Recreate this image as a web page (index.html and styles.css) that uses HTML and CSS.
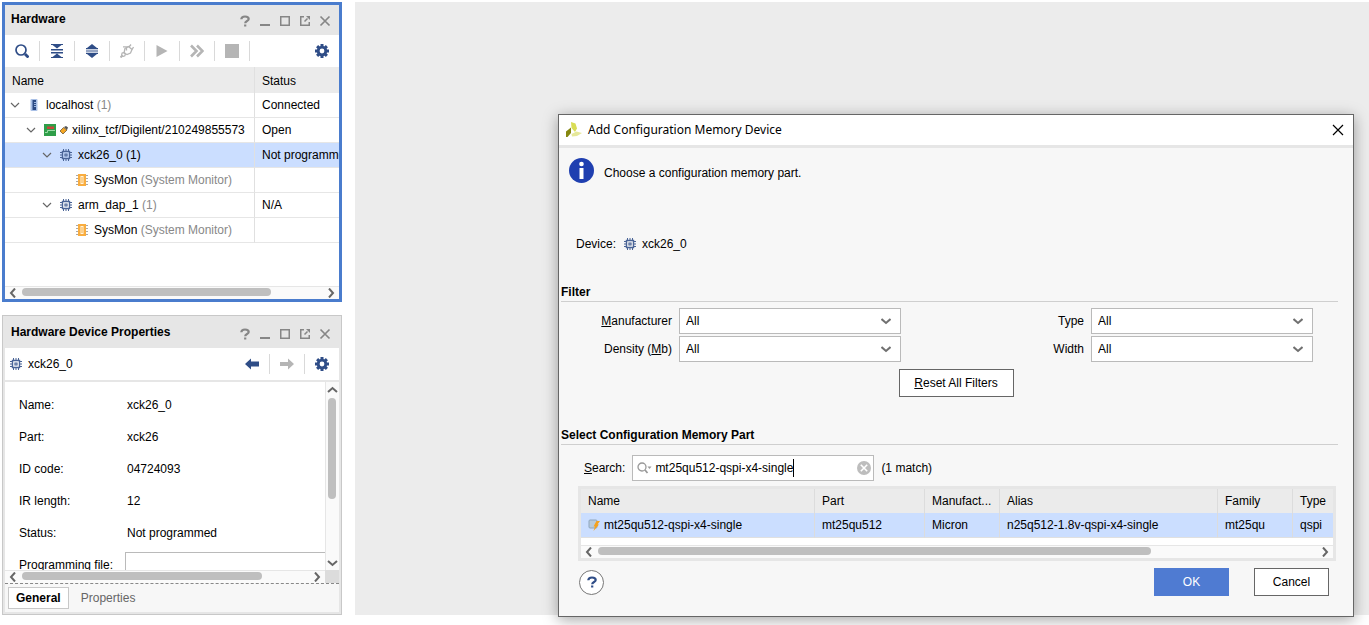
FILE: index.html
```html
<!DOCTYPE html>
<html lang="en">
<head>
  <meta charset="UTF-8">
  <title>Hardware Manager</title>
  <link rel="stylesheet" href="styles.css">
</head>
<body>
  <!-- shared icons -->
  <svg class="sprite" aria-hidden="true">
    <symbol id="help" viewBox="0 0 12 12"><path d="M2.3 4.3C2.4 2.3 4 1.5 6 1.500s3.700.9 3.700 2.600C9.700 6.200 6.200 5.900 6.200 8.300M6.200 9.400v2" fill="none" stroke="currentColor" stroke-width="2.200"/></symbol>
    <symbol id="min" viewBox="0 0 12 12"><path d="M1 10h10" stroke="currentColor" stroke-width="2"/></symbol>
    <symbol id="max" viewBox="0 0 12 12"><path d="M1.750 1.750h8.500v8.500h-8.500z" fill="none" stroke="currentColor" stroke-width="1.500"/></symbol>
    <symbol id="float" viewBox="0 0 12 12"><path d="M5 1.750H1.750v8.500h8.500V7M5.500 6.500L8.500 3.500" fill="none" stroke="currentColor" stroke-width="1.500"/><path d="M7 1H11v4z" fill="currentColor"/></symbol>
    <symbol id="close" viewBox="0 0 12 12"><path d="M1.500 1.500l9 9M10.500 1.500l-9 9" stroke="currentColor" stroke-width="1.700"/></symbol>
    <symbol id="down" viewBox="0 0 10 10"><path d="M1 3l4 4 4-4" fill="none" stroke="currentColor" stroke-width="1.200"/></symbol>
    <symbol id="up" viewBox="0 0 10 10"><path d="M.5 7L5 3l4.500 4" fill="none" stroke="currentColor" stroke-width="2"/></symbol>
    <symbol id="downbold" viewBox="0 0 10 10"><path d="M.5 3L5 7l4.500-4" fill="none" stroke="currentColor" stroke-width="2"/></symbol>
    <symbol id="left" viewBox="0 0 10 10"><path d="M7 .5L3 5l4 4.500" fill="none" stroke="currentColor" stroke-width="2"/></symbol>
    <symbol id="right" viewBox="0 0 10 10"><path d="M3 .5L7 5 3 9.500" fill="none" stroke="currentColor" stroke-width="2"/></symbol>
    <symbol id="gear" viewBox="0 0 14 14">
      <path d="M7 0v3.500M7 10.500V14M0 7h3.500M10.500 7H14M2.100 2.100l2.400 2.400M9.500 9.500l2.400 2.400M2.100 11.900l2.400-2.400M9.500 4.500l2.400-2.400" stroke="currentColor" stroke-width="3"/>
      <circle cx="7" cy="7" r="3.800" fill="none" stroke="currentColor" stroke-width="2.800"/>
    </symbol>
    <symbol id="search" viewBox="0 0 14 14"><circle cx="6" cy="6" r="5" fill="none" stroke="currentColor" stroke-width="1.700"/><path d="M10 10l3.500 3.500" stroke="currentColor" stroke-width="2.800"/></symbol>
    <symbol id="collapse" viewBox="0 0 14 14"><path d="M1 0h12v1H1zM2.500 1h9L7 4.500zM1 5h12v1.500H1zM1 8h12v1.500H1zM7 9.500l4.500 3.500h-9zM1 13h12v1H1z" fill="currentColor"/></symbol>
    <symbol id="expand" viewBox="0 0 14 14"><path d="M7 0l5 4H2zM1 4h12v1.200H1zM1 6.400h12v1.200H1zM1 8.800h12V10H1zM2 10h10l-5 4z" fill="currentColor"/></symbol>
    <symbol id="plug" viewBox="0 0 14 14"><g fill="none" stroke="currentColor" stroke-width="1.300"><path d="M5 4.500L8.500 2.500 12 5.500 10.500 9 7 10.500 4 9z"/><path d="M9 3l2-2.500M12 5.500L13.500 3M3 2.800h5.500M6.500 3v3.500"/><circle cx="3.500" cy="10.500" r="1.800"/></g><path d="M2.500 11.500L.5 13.500" stroke="currentColor" stroke-width="2"/></symbol>
    <symbol id="play" viewBox="0 0 14 14"><path d="M1.500 1L12.500 7l-11 6z" fill="currentColor"/></symbol>
    <symbol id="forward" viewBox="0 0 14 14"><path d="M1 1.500L6.500 7 1 12.500M7 1.500L12.500 7 7 12.500" fill="none" stroke="currentColor" stroke-width="2.600"/></symbol>
    <symbol id="stop" viewBox="0 0 14 14"><path d="M0 0h14v14H0z" fill="currentColor"/></symbol>
    <symbol id="back" viewBox="0 0 14 12"><path d="M0 6l6-5.500v3h8v5H6v3z" fill="currentColor"/></symbol>
    <symbol id="next" viewBox="0 0 14 12"><path d="M14 6L8 .5v3.500H0v4h8v3.500z" fill="currentColor"/></symbol>
    <symbol id="chip" viewBox="0 0 12 12"><g fill="none" stroke="#4a6496"><path d="M2.500 2.500h7v7h-7z" stroke-width="1.400"/><path d="M5 5h2v2H5z" stroke-width="1.200"/><path d="M3.500 0v2M6 0v2M8.500 0v2M3.500 10v2M6 10v2M8.500 10v2M0 3.500h2M0 6h2M0 8.500h2M10 3.500h2M10 6h2M10 8.500h2"/></g></symbol>
    <symbol id="sysmon" viewBox="0 0 12 12"><path d="M0 1.500h12M0 4.500h12M0 7.500h12M0 10.500h12" stroke="#a9a9a9"/><path d="M2 0h8v12H2z" fill="#f9ad3f"/><path d="M4.500 2h3v8h-3z" fill="#fff3dc"/><path d="M6 3v6" stroke="#f9ad3f"/></symbol>
    <symbol id="server" viewBox="0 0 12 12"><rect x="2.500" width="7" height="12" rx="1" fill="#a9c0e6"/><path d="M4.500 1H8v10H4.500z" fill="#2b4a84"/><path d="M6 3.500h2M6 5.500h2M6 7.500h2" stroke="#9db5dd"/></symbol>
    <symbol id="board" viewBox="0 0 12 12"><path d="M0 0h12v12H0z" fill="#2f9e49"/><path d="M3 2.500h7V5H3z" fill="#c9463d"/><path d="M1 8.500h2.500V6.500H11" fill="none" stroke="#9adba6"/></symbol>
    <symbol id="cable" viewBox="0 0 9 9"><path d="M1 5l3.500-3.500L8 4 4 8z" fill="#f5a623" stroke="#6d5b3a" stroke-width=".8"/><path d="M5 1l3 3 1-2.500L7 0z" fill="#555"/></symbol>
    <symbol id="flash" viewBox="0 0 12 12"><rect x="1" y="1" width="8" height="8" rx="1" fill="#b9cbdc" stroke="#8ea6bd"/><path d="M8.500 2H12L9.500 5.500H11L5.500 12l1.500-4.500H5.500z" fill="#f6a21c"/></symbol>
  </svg>

  <aside class="sidebar">
    <section class="panel panel-active">
      <header class="panel-head">
        <h2>Hardware</h2>
        <div class="window-tools">
          <button aria-label="Help"><svg><use href="#help"/></svg></button>
          <button aria-label="Minimize"><svg><use href="#min"/></svg></button>
          <button aria-label="Maximize"><svg><use href="#max"/></svg></button>
          <button aria-label="Float"><svg><use href="#float"/></svg></button>
          <button aria-label="Close"><svg><use href="#close"/></svg></button>
        </div>
      </header>
      <div class="toolbar">
        <button class="tool" aria-label="Search"><svg><use href="#search"/></svg></button>
        <button class="tool" aria-label="Collapse all"><svg><use href="#collapse"/></svg></button>
        <button class="tool" aria-label="Expand all"><svg><use href="#expand"/></svg></button>
        <button class="tool" aria-label="Auto connect" disabled><svg><use href="#plug"/></svg></button>
        <button class="tool" aria-label="Run trigger" disabled><svg><use href="#play"/></svg></button>
        <button class="tool" aria-label="Run trigger immediate" disabled><svg><use href="#forward"/></svg></button>
        <button class="tool" aria-label="Stop trigger" disabled><svg><use href="#stop"/></svg></button>
        <button class="tool tool-last" aria-label="Settings"><svg><use href="#gear"/></svg></button>
      </div>
      <div class="tree-area">
        <table class="tree">
          <thead>
            <tr><th class="tree-name">Name</th><th>Status</th></tr>
          </thead>
          <tbody>
            <tr>
              <td><div class="node"><svg class="twisty"><use href="#down"/></svg><svg class="icon"><use href="#server"/></svg><span>localhost <i>(1)</i></span></div></td>
              <td>Connected</td>
            </tr>
            <tr>
              <td><div class="node level-1"><svg class="twisty"><use href="#down"/></svg><svg class="icon"><use href="#board"/></svg><svg class="icon-cable"><use href="#cable"/></svg><span>xilinx_tcf/Digilent/210249855573</span></div></td>
              <td>Open</td>
            </tr>
            <tr class="selected">
              <td><div class="node level-2"><svg class="twisty"><use href="#down"/></svg><svg class="icon"><use href="#chip"/></svg><span>xck26_0 (1)</span></div></td>
              <td>Not programmed</td>
            </tr>
            <tr>
              <td><div class="node level-3"><svg class="twisty"></svg><svg class="icon"><use href="#sysmon"/></svg><span>SysMon <i>(System Monitor)</i></span></div></td>
              <td></td>
            </tr>
            <tr>
              <td><div class="node level-2"><svg class="twisty"><use href="#down"/></svg><svg class="icon"><use href="#chip"/></svg><span>arm_dap_1 <i>(1)</i></span></div></td>
              <td>N/A</td>
            </tr>
            <tr>
              <td><div class="node level-3"><svg class="twisty"></svg><svg class="icon"><use href="#sysmon"/></svg><span>SysMon <i>(System Monitor)</i></span></div></td>
              <td></td>
            </tr>
          </tbody>
        </table>
      </div>
      <div class="scrollbar">
        <svg><use href="#left"/></svg>
        <div class="track"><div class="thumb" style="width: 83%"></div></div>
        <svg><use href="#right"/></svg>
      </div>
    </section>

    <section class="panel">
      <header class="panel-head">
        <h2>Hardware Device Properties</h2>
        <div class="window-tools">
          <button aria-label="Help"><svg><use href="#help"/></svg></button>
          <button aria-label="Minimize"><svg><use href="#min"/></svg></button>
          <button aria-label="Maximize"><svg><use href="#max"/></svg></button>
          <button aria-label="Float"><svg><use href="#float"/></svg></button>
          <button aria-label="Close"><svg><use href="#close"/></svg></button>
        </div>
      </header>
      <div class="toolbar toolbar-line">
        <div class="device-name"><svg class="icon"><use href="#chip"/></svg>xck26_0</div>
        <button class="tool" aria-label="Previous"><svg><use href="#back"/></svg></button>
        <button class="tool" aria-label="Next" disabled><svg><use href="#next"/></svg></button>
        <button class="tool tool-gear" aria-label="Settings"><svg><use href="#gear"/></svg></button>
      </div>
      <div class="props-area">
        <div class="props-view">
          <dl class="props">
            <dt>Name:</dt><dd>xck26_0</dd>
            <dt>Part:</dt><dd>xck26</dd>
            <dt>ID code:</dt><dd>04724093</dd>
            <dt>IR length:</dt><dd>12</dd>
            <dt>Status:</dt><dd>Not programmed</dd>
            <dt><label for="progfile">Programming file:</label></dt><dd class="field"><input type="text" id="progfile"></dd>
          </dl>
        </div>
        <div class="scrollbar scrollbar-v">
          <svg><use href="#up"/></svg>
          <div class="track"><div class="thumb" style="height: 65%"></div></div>
          <svg><use href="#downbold"/></svg>
        </div>
        <div class="scrollbar">
          <svg><use href="#left"/></svg>
          <div class="track"><div class="thumb" style="width: 84%"></div></div>
          <svg><use href="#right"/></svg>
        </div>
        <div class="corner"></div>
      </div>
      <nav class="tabs">
        <button class="tab tab-active">General</button>
        <button class="tab">Properties</button>
      </nav>
    </section>
  </aside>

  <main class="workspace">
    <div class="dialog" role="dialog" aria-labelledby="dialog-title">
      <header class="dialog-head">
        <svg class="logo" viewBox="0 0 16 16"><path d="M5 0l4.500 1.500L11 6.500 9 10 5.500 6z" fill="#d9dd55"/><path d="M0 9.500L5 5.500v5.500L1.500 15H0z" fill="#85870f"/><path d="M5.500 12l5-2.500 5.500 1.500-5 3-5 .5z" fill="#e6e89a"/></svg>
        <h1 id="dialog-title">Add Configuration Memory Device</h1>
        <button class="dialog-close" aria-label="Close"><svg viewBox="0 0 12 12"><path d="M1 1l10 10M11 1L1 11" stroke="#000" stroke-width="1.200"/></svg></button>
      </header>

      <div class="message">
        <svg class="info" viewBox="0 0 25 25"><circle cx="12.500" cy="12.500" r="12.500" fill="#1f3fb0"/><circle cx="12.500" cy="6" r="2.300" fill="#fff"/><path d="M10.500 10h4v11h-4z" fill="#fff"/></svg>
        <p>Choose a configuration memory part.</p>
      </div>

      <div class="device">Device: <svg class="icon"><use href="#chip"/></svg> xck26_0</div>

      <h3>Filter</h3>
      <div class="filters">
        <label for="manufacturer"><u>M</u>anufacturer</label>
        <div class="select"><select id="manufacturer"><option>All</option></select><svg><use href="#downbold"/></svg></div>
        <label for="type">Type</label>
        <div class="select"><select id="type"><option>All</option></select><svg><use href="#downbold"/></svg></div>
        <label for="density">Density (<u>M</u>b)</label>
        <div class="select"><select id="density"><option>All</option></select><svg><use href="#downbold"/></svg></div>
        <label for="width">Width</label>
        <div class="select"><select id="width"><option>All</option></select><svg><use href="#downbold"/></svg></div>
      </div>
      <button class="btn btn-reset"><u>R</u>eset All Filters</button>

      <h3>Select Configuration Memory Part</h3>
      <div class="search-row">
        <label for="search-box"><u>S</u>earch:</label>
        <div class="search">
          <svg class="search-icon" viewBox="0 0 15 12"><circle cx="5" cy="5" r="4" fill="none" stroke="#999" stroke-width="1.300"/><path d="M8 8l2.500 3" stroke="#999" stroke-width="1.800"/><path d="M10.500 4.500h4L12.500 7z" fill="#999"/></svg>
          <input type="text" id="search-box" value="mt25qu512-qspi-x4-single">
          <span class="caret"></span>
          <button class="clear" aria-label="Clear"><svg viewBox="0 0 14 14"><circle cx="7" cy="7" r="7" fill="#bdbdbd"/><path d="M3.800 3.800l6.400 6.400M10.200 3.800l-6.400 6.400" stroke="#fff" stroke-width="1.600"/></svg></button>
        </div>
        <span>(1 match)</span>
      </div>

      <div class="parts-box">
        <table class="parts">
          <colgroup><col class="c-name"><col class="c-part"><col class="c-short"><col><col class="c-short"><col class="c-type"></colgroup>
          <thead>
            <tr><th>Name</th><th>Part</th><th>Manufact...</th><th>Alias</th><th>Family</th><th>Type</th></tr>
          </thead>
          <tbody>
            <tr class="selected">
              <td><div class="part-name"><svg class="icon"><use href="#flash"/></svg>mt25qu512-qspi-x4-single</div></td>
              <td>mt25qu512</td>
              <td>Micron</td>
              <td>n25q512-1.8v-qspi-x4-single</td>
              <td>mt25qu</td>
              <td>qspi</td>
            </tr>
          </tbody>
        </table>
        <div class="scrollbar">
          <svg><use href="#left"/></svg>
          <div class="track"><div class="thumb" style="width: 77%"></div></div>
          <svg><use href="#right"/></svg>
        </div>
      </div>

      <footer class="dialog-foot">
        <button class="help" aria-label="Help"><svg><use href="#help"/></svg></button>
        <button class="btn btn-primary">OK</button>
        <button class="btn">Cancel</button>
      </footer>
    </div>
  </main>
</body>
</html>
```

FILE: styles.css
```css
* {
  box-sizing: border-box;
}

body {
  font: 12px/16px "Liberation Sans", Arial, sans-serif;
  color: #000;
  background: #fff;
  margin: 0;
  padding: 2px 0 10px 2px;
  display: flex;
  gap: 13px;
  height: 100vh;
  overflow: hidden;
}

h1, h2, h3, p, dl, dd {
  margin: 0;
  font-size: 12px;
}

i {
  font-style: normal;
  color: #888;
}

svg {
  display: block;
  flex: none;
}

button, input, select {
  font: inherit;
  color: inherit;
  margin: 0;
  padding: 0;
  border: 0;
  background: none;
  border-radius: 0;
}

table {
  width: 100%;
  table-layout: fixed;
  border-collapse: separate;
  border-spacing: 0;
}

th, td {
  padding: 0 0 0 7px;
  font-weight: normal;
  text-align: left;
  white-space: nowrap;
  overflow: hidden;
}

.sprite {
  position: absolute;
  width: 0;
  height: 0;
}

.icon {
  width: 12px;
  height: 12px;
}

.selected {
  background: #cbdeff;
}

/* side panels */
.sidebar {
  width: 340px;
  flex: none;
  display: flex;
  flex-direction: column;
  gap: 13px;
}

.panel {
  flex: 1;
  min-height: 0;
  display: flex;
  flex-direction: column;
  border: 1px solid #c8c8c8;
  padding: 2px;
  background: #e6e6e6;
}

.panel-active {
  border: 3px solid #4a7ccd;
  padding: 0;
}

.panel-head {
  display: flex;
  justify-content: space-between;
  height: 30px;
  flex: none;
  padding: 6px 4px 0 6px;
}

.window-tools {
  display: flex;
  padding-top: 4px;
  color: #868686;
}

.window-tools button {
  width: 20px;
  height: 12px;
}

.window-tools svg {
  width: 12px;
  height: 12px;
  margin: 0 auto;
}

.toolbar {
  display: flex;
  align-items: center;
  height: 32px;
  flex: none;
  background: #fff;
}

.toolbar-line {
  height: 34px;
  border-bottom: 2px solid #e6e6e6;
}

.tool {
  width: 35px;
  height: 20px;
  border-right: 1px solid #d9d9d9;
  color: #2f4d87;
}

.tool:disabled {
  color: #b5b5b5;
}

.tool svg {
  width: 14px;
  height: 14px;
  margin: 0 auto;
}

.tool-last,
.tool-gear {
  width: 34px;
  border: 0;
}

.tool-last {
  margin-left: auto;
}

.device-name {
  flex: 1;
  display: flex;
  align-items: center;
  gap: 6px;
  padding-left: 5px;
}

/* hardware tree */
.tree-area {
  flex: 1;
  overflow: hidden;
  background: #fff;
}

.tree th {
  height: 26px;
  padding-top: 2px;
  background: #ebebeb;
}

.tree td {
  height: 25px;
  border-bottom: 1px solid #e6e6e6;
}

.tree-name {
  width: 250px;
}

.tree tr > :first-child {
  border-right: 1px solid #e0e0e0;
}

.tree td:first-child {
  padding-left: 2px;
}

.node {
  display: flex;
  align-items: center;
}

.node .icon {
  margin: 0 6px 0 5px;
}

.twisty {
  width: 16px;
  height: 10px;
  color: #666;
}

.icon-cable {
  width: 9px;
  height: 9px;
  margin: 0 4px 0 -3px;
}

.level-1 { padding-left: 16px; }
.level-2 { padding-left: 32px; }
.level-3 { padding-left: 48px; }

/* scrollbars */
.scrollbar {
  display: flex;
  height: 13px;
  flex: none;
  background: #fafafa;
  border-top: 1px solid #e6e6e6;
  color: #666;
}

.scrollbar svg {
  width: 16px;
  height: 10px;
  margin-top: 1px;
}

.track {
  flex: 1;
  padding: 1px;
}

.thumb {
  height: 8px;
  border-radius: 4px;
  background: #bfbfbf;
}

.scrollbar-v {
  flex-direction: column;
  height: auto;
  border-top: 0;
  border-left: 1px solid #e6e6e6;
}

.scrollbar-v svg {
  width: 13px;
  height: 10px;
  margin: 3px 0 2px;
}

.scrollbar-v .track {
  padding: 1px 2px;
}

.scrollbar-v .thumb {
  width: 8px;
}

/* device properties */
.props-area {
  flex: 1;
  min-height: 0;
  display: grid;
  grid-template: minmax(0, 1fr) 13px / minmax(0, 1fr) 14px;
  background: #fff;
}

.props-view {
  overflow: hidden;
}

.corner {
  background: #dcdcdc;
}

.props {
  display: grid;
  grid-template-columns: 106px 1fr;
  padding: 7px 0 0 14px;
  line-height: 32px;
}

.props dt {
  height: 32px;
}

.props dd {
  padding-left: 2px;
}

.props .field {
  padding: 3px 0 0;
}

.field input {
  display: block;
  width: 100%;
  height: 26px;
  border: 1px solid #bababa;
  border-right: 0;
  background: #fff;
}

.tabs {
  display: flex;
  align-items: center;
  height: 29px;
  flex: none;
  padding-left: 3px;
  background: #f7f7f7;
  border-top: 1px dashed #888;
}

.tab {
  height: 22px;
  padding: 0 12px;
  color: #666;
}

.tab-active {
  padding: 0 7px;
  border: 1px solid #c8c8c8;
  background: #fff;
  color: #000;
  font-weight: bold;
}

/* workspace and dialog */
.workspace {
  flex: 1;
  position: relative;
  background: #ececec;
}

.dialog {
  position: absolute;
  top: 112px;
  left: 203px;
  right: 15px;
  background: #f7f7f7;
  border: 1px solid #666;
  box-shadow: 0 3px 14px rgba(0, 0, 0, 0.35);
}

.dialog-head {
  display: flex;
  align-items: center;
  gap: 6px;
  height: 33px;
  padding: 0 9px 0 7px;
  background: #fff;
  border-bottom: 3px solid #e6e6e6;
}

.dialog-head h1 {
  flex: 1;
  font-family: "Noto Sans", "Segoe UI", sans-serif;
  font-weight: normal;
}

.logo {
  width: 16px;
  height: 16px;
}

.dialog-close svg {
  width: 12px;
  height: 12px;
}

.message {
  display: flex;
  gap: 10px;
  padding: 10px 10px 0;
}

.message p {
  padding-top: 7px;
}

.info {
  width: 25px;
  height: 25px;
}

.device {
  display: flex;
  align-items: center;
  gap: 6px;
  margin: 53px 17px 0;
}

.device .icon {
  margin-left: 2px;
}

.dialog h3 {
  height: 18px;
  margin: 32px 15px 0 2px;
  border-bottom: 1px solid #cfcfcf;
}

.filters {
  display: grid;
  grid-template-columns: 120px 222px 1fr 222px;
  gap: 2px 0;
  align-items: center;
  margin: 6px 40px 7px 0;
}

.filters label {
  padding-right: 7px;
  text-align: right;
}

.select {
  position: relative;
}

.select select {
  display: block;
  width: 100%;
  height: 26px;
  padding-left: 6px;
  appearance: none;
  background: #fff;
  border: 1px solid #bababa;
}

.select svg {
  position: absolute;
  top: 8px;
  right: 10px;
  width: 10px;
  height: 10px;
  color: #707070;
  pointer-events: none;
}

.btn {
  width: 75px;
  height: 28px;
  background: #fff;
  border: 1px solid #666;
}

.btn-reset {
  display: block;
  width: 115px;
  margin: 0 auto;
}

.btn-primary {
  margin: 0 25px 0 auto;
  background: #4f7bd2;
  border-color: #4f7bd2;
  color: #fff;
}

.btn-reset + h3 {
  margin-top: 30px;
}

.search-row {
  display: flex;
  align-items: center;
  gap: 7px;
  margin: 10px 25px 5px;
}

.search {
  display: flex;
  align-items: center;
  width: 242px;
  height: 26px;
  padding: 0 2px 0 4px;
  background: #fff;
  border: 1px solid #bababa;
}

.search-icon {
  width: 15px;
  height: 12px;
  margin-right: 3px;
}

.search input {
  field-sizing: content;
  min-width: 10px;
  max-width: 190px;
  outline: 0;
}

.caret {
  width: 1px;
  height: 18px;
  background: #000;
}

.clear {
  margin-left: auto;
}

.clear svg {
  width: 14px;
  height: 14px;
}

.parts-box {
  margin: 0 17px 7px 19px;
  border: 3px solid #e6e6e6;
  background: #fff;
}

.parts {
  margin-bottom: 7px;
}

.parts th {
  height: 24px;
  background: #ebebeb;
  text-overflow: ellipsis;
}

.parts td {
  height: 25px;
  border-bottom: 1px solid #e0e0e0;
}

.parts th:not(:last-child),
.parts td:not(:last-child) {
  border-right: 1px solid #dcdcdc;
}

.c-name { width: 234px; }
.c-part { width: 110px; }
.c-short { width: 75px; }
.c-type { width: 40px; }

.part-name {
  display: flex;
  align-items: center;
  gap: 4px;
}

.dialog-foot {
  display: flex;
  align-items: center;
  padding: 0 24px 20px 20px;
}

.help {
  width: 25px;
  height: 25px;
  border: 1px solid #777;
  border-radius: 50%;
  background: #fff;
  color: #2f4d87;
}

.help svg {
  width: 12px;
  height: 12px;
  margin: 0 auto;
}
```
